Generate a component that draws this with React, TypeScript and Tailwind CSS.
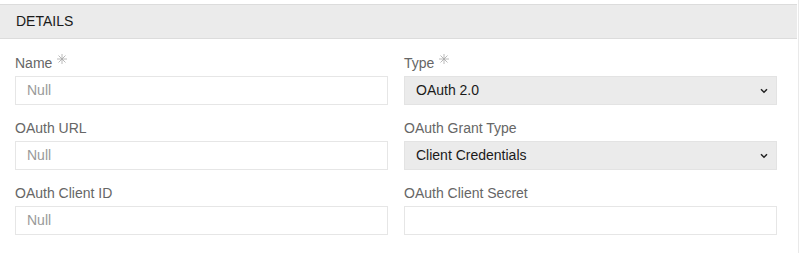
import React from "react";

const font = { fontFamily: '"Liberation Sans", Arial, sans-serif' };

function Star() {
  return (
    <svg width="10" height="10" viewBox="0 0 10 10" className="ml-[5px] -mt-[9px]" fill="none" stroke="#a8a8a8" strokeWidth="0.8">
      <line x1="5" y1="0" x2="5" y2="10" />
      <line x1="0" y1="5" x2="10" y2="5" />
      <line x1="1.5" y1="1.5" x2="8.5" y2="8.5" />
      <line x1="8.5" y1="1.5" x2="1.5" y2="8.5" />
    </svg>
  );
}

function Label({ text, required }: { text: string; required?: boolean }) {
  return (
    <div className="flex items-center h-4 leading-4 text-[14px] text-[#666666] mb-[5px]">
      <span>{text}</span>
      {required && <Star />}
    </div>
  );
}

function TextField({ placeholder }: { placeholder?: string }) {
  return (
    <div className="h-[29px] border border-[#e6e6e6] bg-white flex items-center pl-[11px] text-[14px] text-[#999999]">
      {placeholder}
    </div>
  );
}

function SelectField({ value }: { value: string }) {
  return (
    <div className="h-[29px] border border-[#e3e3e3] bg-[#ebebeb] flex items-center justify-between pl-[11px] pr-[8px] text-[14px] text-[#1a1a1a]">
      <span>{value}</span>
      <svg width="8" height="6" viewBox="0 0 8 6" fill="none" stroke="#222" strokeWidth="1.5">
        <path d="M1 1.3 L4 4.3 L7 1.3" />
      </svg>
    </div>
  );
}

export default function App() {
  return (
    <div className="w-[800px] h-[253px] bg-white flex" style={font}>
      <div className="w-[799px] h-full border-r border-[#e9e9e9] pt-[4px]">
        <div className="w-[797px] h-[35px] bg-[#ebebeb] border-t border-b border-[#dcdcdc] flex items-center pl-[16px] text-[14px] text-[#1a1a1a]">
          DETAILS
        </div>
        <div className="grid grid-cols-2 gap-x-[16px] gap-y-[15px] pl-[15px] pr-[21px] pt-[16px]">
          <div>
            <Label text="Name" required />
            <TextField placeholder="Null" />
          </div>
          <div>
            <Label text="Type" required />
            <SelectField value="OAuth 2.0" />
          </div>
          <div>
            <Label text="OAuth URL" />
            <TextField placeholder="Null" />
          </div>
          <div>
            <Label text="OAuth Grant Type" />
            <SelectField value="Client Credentials" />
          </div>
          <div>
            <Label text="OAuth Client ID" />
            <TextField placeholder="Null" />
          </div>
          <div>
            <Label text="OAuth Client Secret" />
            <TextField />
          </div>
        </div>
      </div>
    </div>
  );
}
